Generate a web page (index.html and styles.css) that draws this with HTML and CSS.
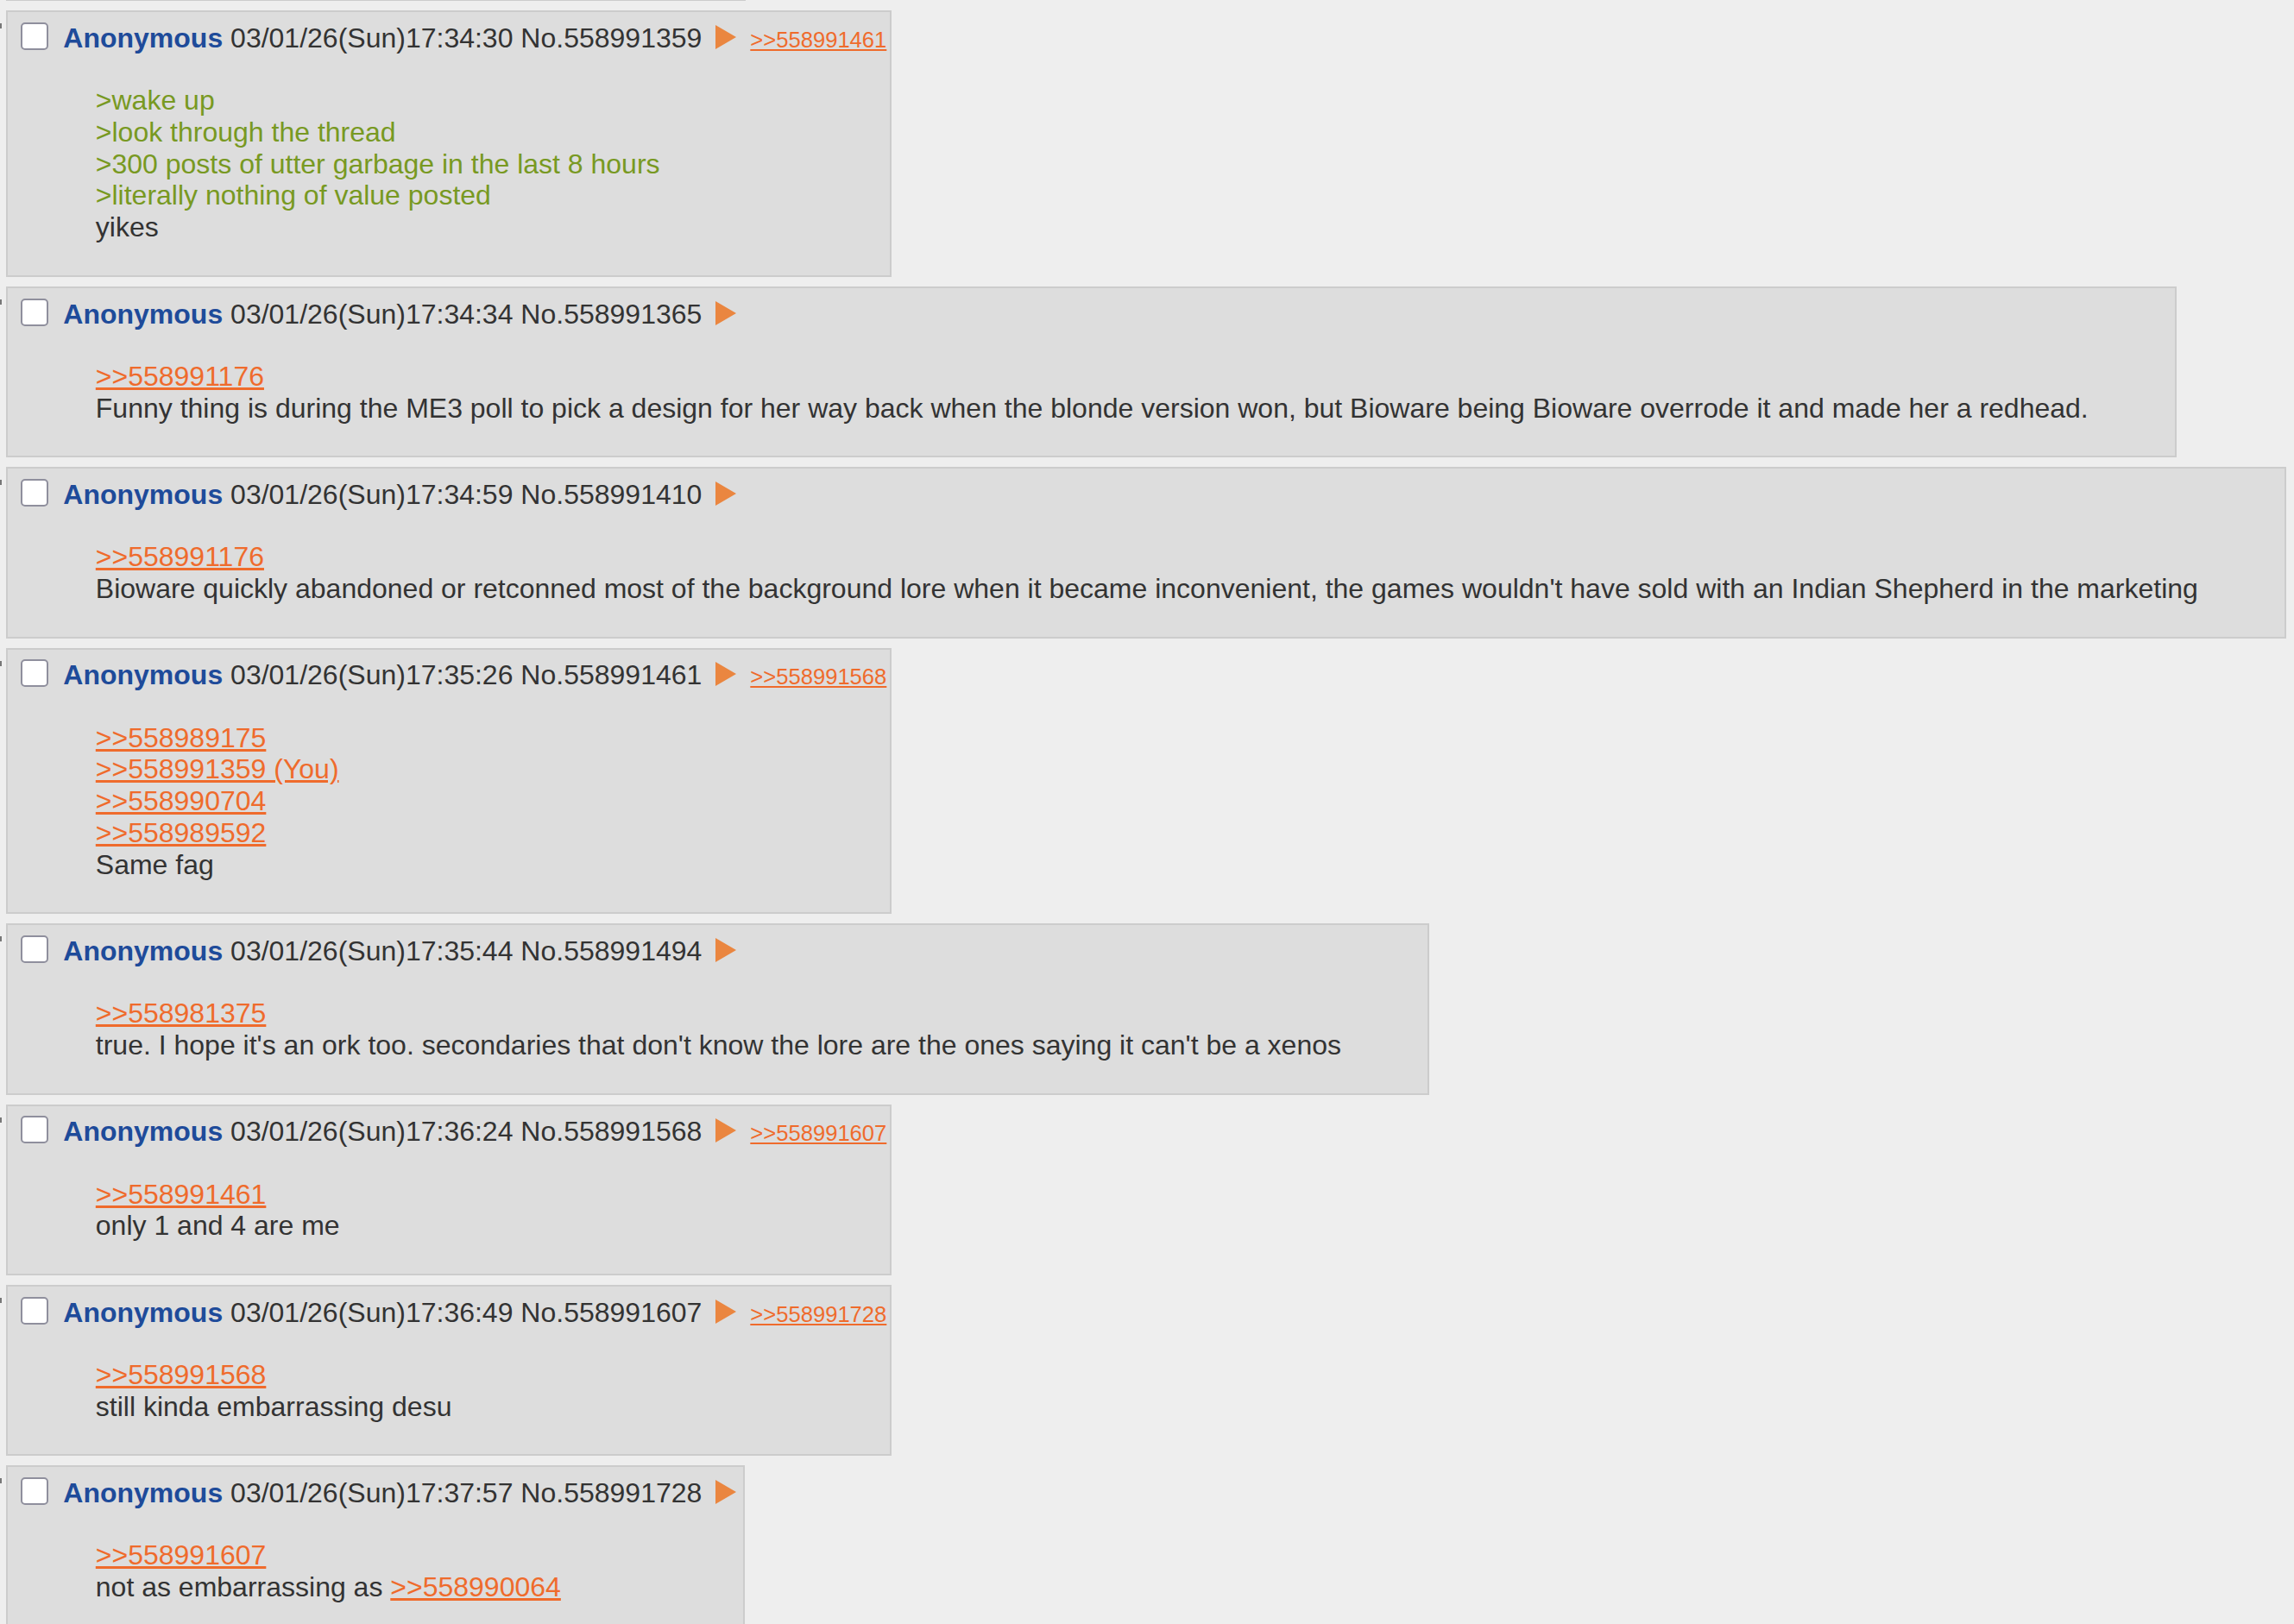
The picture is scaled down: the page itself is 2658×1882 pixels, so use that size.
FILE: index.html
```html
<!DOCTYPE html>
<html lang="en">
<head>
  <meta charset="UTF-8">
  <title>Thread</title>
  <link rel="stylesheet" href="styles.css">
</head>
<body>
  <div class="thread">
    <div class="prev-edge"></div>

    <div class="reply-row">
      <div class="side-arrows"><span class="tick"></span></div>
      <div class="post">
        <div class="post-info">
          <input type="checkbox" class="post-check">
          <span class="info-text"><span class="name">Anonymous</span> 03/01/26(Sun)17:34:30 No.558991359<a class="menu-btn"><svg viewBox="0 0 24 28" width="24" height="28"><path d="M0 0L24 14L0 28Z" fill="currentColor"/></svg></a><a class="backlink" href="#p558991461">&gt;&gt;558991461</a></span>
        </div>
        <blockquote class="post-message">
          <span class="quote">&gt;wake up</span><br>
          <span class="quote">&gt;look through the thread</span><br>
          <span class="quote">&gt;300 posts of utter garbage in the last 8 hours</span><br>
          <span class="quote">&gt;literally nothing of value posted</span><br>
          yikes
        </blockquote>
      </div>
    </div>

    <div class="reply-row">
      <div class="side-arrows"><span class="tick"></span></div>
      <div class="post">
        <div class="post-info">
          <input type="checkbox" class="post-check">
          <span class="info-text"><span class="name">Anonymous</span> 03/01/26(Sun)17:34:34 No.558991365<a class="menu-btn"><svg viewBox="0 0 24 28" width="24" height="28"><path d="M0 0L24 14L0 28Z" fill="currentColor"/></svg></a></span>
        </div>
        <blockquote class="post-message">
          <a class="quotelink" href="#p558991176">&gt;&gt;558991176</a><br>
          Funny thing is during the ME3 poll to pick a design for her way back when the blonde version won, but Bioware being Bioware overrode it and made her a redhead.
        </blockquote>
      </div>
    </div>

    <div class="reply-row">
      <div class="side-arrows"><span class="tick"></span></div>
      <div class="post">
        <div class="post-info">
          <input type="checkbox" class="post-check">
          <span class="info-text"><span class="name">Anonymous</span> 03/01/26(Sun)17:34:59 No.558991410<a class="menu-btn"><svg viewBox="0 0 24 28" width="24" height="28"><path d="M0 0L24 14L0 28Z" fill="currentColor"/></svg></a></span>
        </div>
        <blockquote class="post-message">
          <a class="quotelink" href="#p558991176">&gt;&gt;558991176</a><br>
          Bioware quickly abandoned or retconned most of the background lore when it became inconvenient, the games wouldn't have sold with an Indian Shepherd in the marketing
        </blockquote>
      </div>
    </div>

    <div class="reply-row">
      <div class="side-arrows"><span class="tick"></span></div>
      <div class="post">
        <div class="post-info">
          <input type="checkbox" class="post-check">
          <span class="info-text"><span class="name">Anonymous</span> 03/01/26(Sun)17:35:26 No.558991461<a class="menu-btn"><svg viewBox="0 0 24 28" width="24" height="28"><path d="M0 0L24 14L0 28Z" fill="currentColor"/></svg></a><a class="backlink" href="#p558991568">&gt;&gt;558991568</a></span>
        </div>
        <blockquote class="post-message">
          <a class="quotelink" href="#p558989175">&gt;&gt;558989175</a><br>
          <a class="quotelink" href="#p558991359">&gt;&gt;558991359 (You)</a><br>
          <a class="quotelink" href="#p558990704">&gt;&gt;558990704</a><br>
          <a class="quotelink" href="#p558989592">&gt;&gt;558989592</a><br>
          Same fag
        </blockquote>
      </div>
    </div>

    <div class="reply-row">
      <div class="side-arrows"><span class="tick"></span></div>
      <div class="post">
        <div class="post-info">
          <input type="checkbox" class="post-check">
          <span class="info-text"><span class="name">Anonymous</span> 03/01/26(Sun)17:35:44 No.558991494<a class="menu-btn"><svg viewBox="0 0 24 28" width="24" height="28"><path d="M0 0L24 14L0 28Z" fill="currentColor"/></svg></a></span>
        </div>
        <blockquote class="post-message">
          <a class="quotelink" href="#p558981375">&gt;&gt;558981375</a><br>
          true. I hope it's an ork too. secondaries that don't know the lore are the ones saying it can't be a xenos
        </blockquote>
      </div>
    </div>

    <div class="reply-row">
      <div class="side-arrows"><span class="tick"></span></div>
      <div class="post">
        <div class="post-info">
          <input type="checkbox" class="post-check">
          <span class="info-text"><span class="name">Anonymous</span> 03/01/26(Sun)17:36:24 No.558991568<a class="menu-btn"><svg viewBox="0 0 24 28" width="24" height="28"><path d="M0 0L24 14L0 28Z" fill="currentColor"/></svg></a><a class="backlink" href="#p558991607">&gt;&gt;558991607</a></span>
        </div>
        <blockquote class="post-message">
          <a class="quotelink" href="#p558991461">&gt;&gt;558991461</a><br>
          only 1 and 4 are me
        </blockquote>
      </div>
    </div>

    <div class="reply-row">
      <div class="side-arrows"><span class="tick"></span></div>
      <div class="post">
        <div class="post-info">
          <input type="checkbox" class="post-check">
          <span class="info-text"><span class="name">Anonymous</span> 03/01/26(Sun)17:36:49 No.558991607<a class="menu-btn"><svg viewBox="0 0 24 28" width="24" height="28"><path d="M0 0L24 14L0 28Z" fill="currentColor"/></svg></a><a class="backlink" href="#p558991728">&gt;&gt;558991728</a></span>
        </div>
        <blockquote class="post-message">
          <a class="quotelink" href="#p558991568">&gt;&gt;558991568</a><br>
          still kinda embarrassing desu
        </blockquote>
      </div>
    </div>

    <div class="reply-row">
      <div class="side-arrows"><span class="tick"></span></div>
      <div class="post">
        <div class="post-info">
          <input type="checkbox" class="post-check">
          <span class="info-text"><span class="name">Anonymous</span> 03/01/26(Sun)17:37:57 No.558991728<a class="menu-btn"><svg viewBox="0 0 24 28" width="24" height="28"><path d="M0 0L24 14L0 28Z" fill="currentColor"/></svg></a></span>
        </div>
        <blockquote class="post-message">
          <a class="quotelink" href="#p558991607">&gt;&gt;558991607</a><br>
          not as embarrassing as <a class="quotelink" href="#p558990064">&gt;&gt;558990064</a>
        </blockquote>
      </div>
    </div>
  </div>
</body>
</html>
```

FILE: styles.css
```css
body {
  margin: 0;
  background-color: #eeeeee;
  font-family: "Liberation Sans", Arial, sans-serif;
  font-size: 32px;
  color: #333333;
}

.prev-edge {
  margin-left: 7px;
  width: 857px;
  height: 1px;
  background-color: #cccccc;
}

.reply-row {
  display: flex;
  align-items: flex-start;
  margin-top: 11px;
}

.side-arrows {
  flex: none;
  width: 7px;
  padding-top: 15px;
}

.tick {
  display: block;
  width: 2px;
  height: 6px;
  background-color: #777777;
}

.post {
  flex: none;
  background-color: #dddddd;
  border: 2px solid #cccccc;
  padding: 4.8px 4px 4.8px 4.8px;
}

.post-info {
  display: flex;
  align-items: flex-start;
  height: 47.2px;
  white-space: nowrap;
}

.post-check {
  appearance: none;
  -webkit-appearance: none;
  box-sizing: border-box;
  flex: none;
  width: 32px;
  height: 32px;
  margin: 7px 17.5px 0 10px;
  background-color: #ffffff;
  border: 2px solid #8f8f9d;
  border-radius: 5px;
}

.info-text {
  padding-top: 7px;
  line-height: 36.8px;
}

.name {
  font-weight: bold;
  color: #1e4b9a;
}

.menu-btn {
  color: #ea8640;
  margin-left: 16px;
  padding-right: 4px;
}

.menu-btn svg {
  vertical-align: -2px;
}

.backlink {
  font-size: 25.6px;
  color: #ef6b2c;
  text-decoration: underline;
  margin-left: 12px;
}

.post-message {
  margin: 32px 96px 32px 97px;
  line-height: 36.8px;
  white-space: nowrap;
}

.quote {
  color: #789922;
}

.quotelink {
  color: #ef6b2c;
  text-decoration: underline;
}
```
